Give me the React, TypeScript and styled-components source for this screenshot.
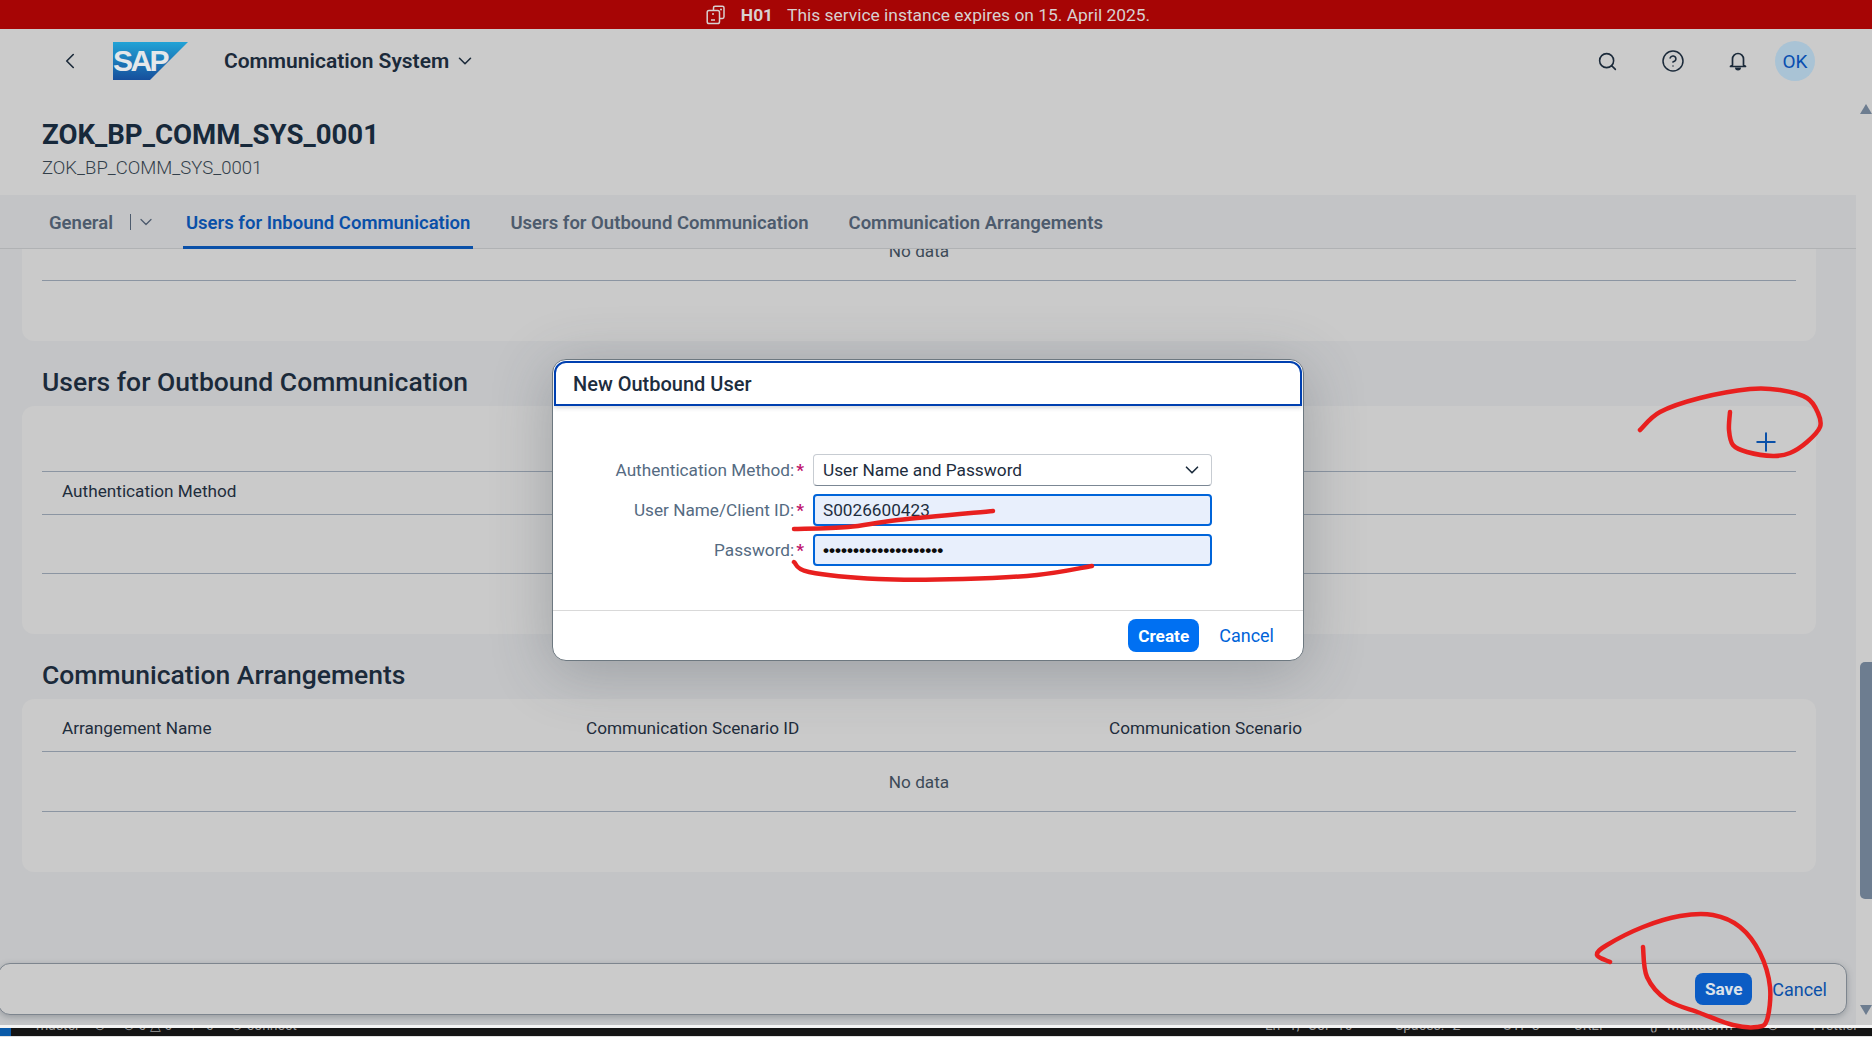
import { createGlobalStyle, styled } from 'styled-components';
import { ChevronDown, ChevronLeft, CircleHelp, Plus, Search } from 'lucide-react';

const GlobalStyle = createGlobalStyle`
  html, body {
    margin: 0;
    padding: 0;
    height: 100%;
    overflow: hidden;
    font-family: Roboto, "Liberation Sans", sans-serif;
    color: #1b2a3a;
  }
`;

type Point = [number, number];

// hand-drawn red marks from the reference, as points along each stroke
const scribbles: Point[][] = [
  [[1640, 430], [1660, 412], [1700, 398], [1750, 389], [1780, 390], [1807, 398], [1818, 413], [1820, 427], [1807, 442], [1790, 453], [1773, 456], [1747, 452], [1733, 445], [1729, 430], [1730, 412]],
  [[794, 529], [848, 527], [898, 520], [993, 511]],
  [[794, 562], [809, 572], [878, 579], [963, 579], [1037, 575], [1092, 566]],
  [[1610, 962], [1597, 955], [1607, 945], [1643, 927], [1680, 916], [1713, 915], [1740, 927], [1760, 953], [1770, 987], [1767, 1020], [1757, 1027], [1733, 1025], [1700, 1013], [1667, 1000], [1647, 977], [1643, 947]],
];

const smoothPath = (points: Point[]) =>
  points.reduce((d, point, i) => {
    if (i === 0) return `M${point[0]} ${point[1]}`;
    const p0 = points[Math.max(i - 2, 0)];
    const p1 = points[i - 1];
    const p3 = points[Math.min(i + 1, points.length - 1)];
    const c1 = [p1[0] + (point[0] - p0[0]) / 6, p1[1] + (point[1] - p0[1]) / 6];
    const c2 = [point[0] - (p3[0] - p1[0]) / 6, point[1] - (p3[1] - p1[1]) / 6];
    return `${d}C${c1[0]} ${c1[1]} ${c2[0]} ${c2[1]} ${point[0]} ${point[1]}`;
  }, '');

export default function App() {
  return (
    <Page>
      <GlobalStyle />
      <Banner>
        <BannerIcon viewBox="0 0 20 20">
          <path d="M7.5 5V2.8a1.6 1.6 0 0 1 1.6-1.6h7.3a1.6 1.6 0 0 1 1.6 1.6v9a1.6 1.6 0 0 1-1.6 1.6H14" fill="none" stroke="currentColor" strokeWidth="1.5" />
          <rect x="1.2" y="5.5" width="12.3" height="13" rx="1.8" fill="none" stroke="currentColor" strokeWidth="1.5" />
          <path d="M5 15h4" stroke="currentColor" strokeWidth="1.5" />
          <circle cx="15" cy="4.5" r="1" fill="currentColor" />
          <circle cx="7" cy="9" r="1" fill="currentColor" />
        </BannerIcon>
        <strong>H01</strong>
        <BannerText>This service instance expires on 15. April 2025.</BannerText>
      </Banner>

      <ShellBar>
        <BackButton>
          <ChevronLeft size={26} strokeWidth={1.5} />
        </BackButton>
        <SapLogo />
        <AppTitle>
          Communication System
          <ChevronDown size={22} strokeWidth={1.7} />
        </AppTitle>
        <ShellActions>
          <ShellIcon>
            <Search size={21} strokeWidth={1.8} />
          </ShellIcon>
          <ShellIcon>
            <CircleHelp size={24} strokeWidth={1.5} />
          </ShellIcon>
          <ShellIcon>
            <BellIcon />
          </ShellIcon>
          <Avatar>OK</Avatar>
        </ShellActions>
      </ShellBar>

      <Workspace>
        <MainColumn>
          <TitleBlock>
            <PageTitle>ZOK_BP_COMM_SYS_0001</PageTitle>
            <PageSubtitle>ZOK_BP_COMM_SYS_0001</PageSubtitle>
          </TitleBlock>

          <TabBar>
            <Tab $first>General</Tab>
            <TabMore>
              <ChevronDown size={20} strokeWidth={1.5} />
            </TabMore>
            <Tab $active>Users for Inbound Communication</Tab>
            <Tab>Users for Outbound Communication</Tab>
            <Tab>Communication Arrangements</Tab>
          </TabBar>

          <Content>
            <ScrolledCard>
              <NoData>No data</NoData>
            </ScrolledCard>

            <SectionTitle>Users for Outbound Communication</SectionTitle>
            <Card>
              <CardToolbar>
                <Plus size={30} strokeWidth={1.6} />
              </CardToolbar>
              <HeaderRow $bordered>
                <HeaderCell>Authentication Method</HeaderCell>
              </HeaderRow>
              <EmptyRow />
            </Card>

            <SectionTitle>Communication Arrangements</SectionTitle>
            <Card>
              <HeaderRow>
                <HeaderCell>Arrangement Name</HeaderCell>
                <HeaderCell>Communication Scenario ID</HeaderCell>
                <HeaderCell>Communication Scenario</HeaderCell>
              </HeaderRow>
              <NoData>No data</NoData>
            </Card>
          </Content>

          <FooterBar>
            <SaveButton>Save</SaveButton>
            <FooterLink>Cancel</FooterLink>
          </FooterBar>
        </MainColumn>

        <ScrollRail>
          <ScrollArrow />
          <ScrollTrack>
            <ScrollThumb />
          </ScrollTrack>
          <ScrollArrow $down />
        </ScrollRail>
      </Workspace>

      <StatusBar>
        <StatusFlag />
        <StatusText>master &nbsp;&nbsp; ⊙ &nbsp;&nbsp;&nbsp; ⊘ 0 △ 0 &nbsp;&nbsp;&nbsp; ⚐ 0 &nbsp;&nbsp;&nbsp; ⊙ connect</StatusText>
        <StatusRight>Ln 1, Col 10 &nbsp;&nbsp;&nbsp; Spaces: 2 &nbsp;&nbsp;&nbsp; UTF-8 &nbsp;&nbsp; CRLF &nbsp;&nbsp;&nbsp; {'{}'} Markdown &nbsp;&nbsp; ⊙ &nbsp;&nbsp; Prettier</StatusRight>
      </StatusBar>

      <Dialog>
        <DialogHeader>New Outbound User</DialogHeader>
        <DialogBody>
          <FieldLabel>
            Authentication Method:<Required>*</Required>
          </FieldLabel>
          <SelectBox>
            User Name and Password
            <ChevronDown size={22} strokeWidth={1.8} />
          </SelectBox>
          <FieldLabel>
            User Name/Client ID:<Required>*</Required>
          </FieldLabel>
          <TextField>S0026600423</TextField>
          <FieldLabel>
            Password:<Required>*</Required>
          </FieldLabel>
          <TextField $secret>••••••••••••••••••••</TextField>
        </DialogBody>
        <DialogFooter>
          <PrimaryButton>Create</PrimaryButton>
          <FooterLink $bright>Cancel</FooterLink>
        </DialogFooter>
      </Dialog>

      <Scribbles viewBox="0 0 1872 1037">
        {scribbles.map((points, index) => (
          <path key={index} d={smoothPath(points)} />
        ))}
      </Scribbles>
    </Page>
  );
}

function BellIcon() {
  return (
    <svg width="22" height="22" viewBox="0 0 22 22">
      <path d="M5.5 15V9a5.5 5.5 0 0 1 11 0v6l2 1.5H3.5z" fill="none" stroke="currentColor" strokeWidth="1.7" strokeLinejoin="round" />
      <path d="M8 17.5h6a3 3 0 0 1-6 0z" fill="currentColor" />
    </svg>
  );
}

function SapLogo() {
  return (
    <LogoMark viewBox="0 0 75 38">
      <defs>
        <linearGradient id="sapFill" x1="0" y1="0" x2="0" y2="1">
          <stop offset="0" stopColor="#22a3d6" />
          <stop offset="1" stopColor="#164f9c" />
        </linearGradient>
      </defs>
      <polygon points="0,0 75,0 37,38 0,38" fill="url(#sapFill)" />
      <text x="0" y="29" fontFamily="Liberation Sans, sans-serif" fontWeight="700" fontSize="30" letterSpacing="-2.6" fill="#e3e7ea">
        SAP
      </text>
    </LogoMark>
  );
}

const Page = styled.div`
  position: relative;
  display: flex;
  flex-direction: column;
  width: 1872px;
  height: 1037px;
  overflow: hidden;
  background: #cbcbcb;
`;

const Banner = styled.div`
  display: flex;
  align-items: center;
  justify-content: center;
  flex: 0 0 29px;
  padding-right: 16px;
  color: #d8d0d0;
  background: #a60505;
  font-size: 17.4px;

  strong {
    margin-right: 14px;
    font-weight: 700;
  }
`;

const BannerIcon = styled.svg`
  width: 20px;
  height: 20px;
  margin-right: 15px;
`;

const BannerText = styled.span`
  font-weight: 400;
`;

const ShellBar = styled.header`
  display: flex;
  align-items: center;
  flex: 0 0 64px;
  padding-right: 57px;
  color: #1b2a3a;
`;

const BackButton = styled.span`
  display: flex;
  margin-left: 57px;
`;

const LogoMark = styled.svg`
  width: 75px;
  height: 38px;
  margin-left: 30px;
`;

const AppTitle = styled.div`
  display: flex;
  align-items: center;
  gap: 5px;
  margin-left: 36px;
  font-size: 21px;
  font-weight: 600;
`;

const ShellActions = styled.div`
  display: flex;
  align-items: center;
  margin-left: auto;
`;

const ShellIcon = styled.span`
  display: flex;
  justify-content: center;
  width: 65px;
`;

const Avatar = styled.span`
  display: flex;
  align-items: center;
  justify-content: center;
  width: 40px;
  height: 40px;
  margin-left: 5px;
  border-radius: 50%;
  color: #0a4fb0;
  background: #a9c3d5;
  font-size: 19px;
`;

const Workspace = styled.div`
  display: flex;
  flex: 1;
  min-height: 0;
`;

const MainColumn = styled.div`
  position: relative;
  display: flex;
  flex-direction: column;
  flex: 0 0 1856px;
  min-height: 0;
`;

const TitleBlock = styled.div`
  flex: 0 0 102px;
  padding: 27px 0 0 42px;
  box-sizing: border-box;
`;

const PageTitle = styled.h1`
  margin: 0;
  color: #17293b;
  font-size: 27.6px;
  line-height: 30px;
  font-weight: 700;
`;

const PageSubtitle = styled.div`
  margin-top: 7px;
  color: #333f4a;
  font-size: 18.5px;
  line-height: 22px;
  font-weight: 300;
`;

const TabBar = styled.nav`
  display: flex;
  align-items: stretch;
  flex: 0 0 54px;
  box-sizing: border-box;
  padding-left: 46px;
  background: #c3c4c6;
  border-bottom: 1px solid #b0b2b4;
`;

const Tab = styled.div<{ $active?: boolean; $first?: boolean }>`
  display: flex;
  align-items: center;
  margin-right: ${({ $first }) => ($first ? '14px' : '34px')};
  margin-bottom: -1px;
  padding: 5px 3px 0;
  color: ${({ $active }) => ($active ? '#0a50a8' : '#4d5b6d')};
  border-bottom: 3px solid ${({ $active }) => ($active ? '#0a50a8' : 'transparent')};
  font-size: 18.5px;
  font-weight: 600;
  white-space: nowrap;
`;

const TabMore = styled.span`
  display: flex;
  align-items: center;
  height: 16px;
  align-self: center;
  margin-right: 27px;
  padding-left: 5px;
  color: #4d5b6d;
  border-left: 1px solid #4d5b6d;
`;

const Content = styled.main`
  flex: 1;
  min-height: 0;
  overflow: hidden;
  padding: 0 40px 0 22px;
  background: #c3c4c6;
`;

const Card = styled.section`
  padding: 0 20px 60px;
  border-radius: 12px;
  background: #cacaca;
`;

const ScrolledCard = styled(Card)`
  margin-top: -28px;
`;

const NoData = styled.div`
  display: flex;
  align-items: center;
  justify-content: center;
  height: 60px;
  box-sizing: border-box;
  border-bottom: 1px solid #8b95a2;
  color: #3d4a58;
  font-size: 17.2px;
`;

const SectionTitle = styled.h2`
  margin: 0;
  padding-left: 20px;
  height: 65px;
  color: #1b2a3a;
  font-size: 26.5px;
  line-height: 82px;
  font-weight: 500;
`;

const CardToolbar = styled.div`
  display: flex;
  align-items: flex-end;
  justify-content: flex-end;
  height: 65px;
  box-sizing: border-box;
  padding: 0 15px 14px 0;
  color: #0a50a8;
`;

const HeaderRow = styled.div<{ $bordered?: boolean }>`
  display: grid;
  grid-template-columns: 524px 523px 1fr;
  height: ${({ $bordered }) => ($bordered ? '38px' : '47px')};
  align-items: center;
  padding: ${({ $bordered }) => ($bordered ? '0 20px 4px' : '5px 20px 0')};
  border-top: ${({ $bordered }) => ($bordered ? '1px solid #8b95a2' : 'none')};
  border-bottom: 1px solid #8b95a2;
`;

const HeaderCell = styled.div`
  color: #1f2d3c;
  font-size: 17.2px;
  line-height: 24px;
`;

const EmptyRow = styled.div`
  height: 58px;
  border-bottom: 1px solid #8b95a2;
`;

const FooterBar = styled.footer`
  position: absolute;
  left: -2px;
  right: 9px;
  bottom: 10px;
  display: flex;
  align-items: center;
  justify-content: flex-end;
  gap: 20px;
  height: 52px;
  box-sizing: border-box;
  padding-right: 19px;
  border: 1px solid #7d858e;
  border-radius: 12px;
  background: #cbcbcb;
  box-shadow: 0 2px 6px rgba(70, 80, 90, 0.35);
`;

const SaveButton = styled.span`
  display: flex;
  align-items: center;
  justify-content: center;
  width: 57px;
  height: 32px;
  border-radius: 8px;
  color: #dbe2ea;
  background: #0b5cc4;
  font-size: 17.2px;
  font-weight: 700;
`;

const FooterLink = styled.span<{ $bright?: boolean }>`
  color: ${({ $bright }) => ($bright ? '#0064d9' : '#0a50a8')};
  font-size: 18px;
`;

const ScrollRail = styled.div`
  display: flex;
  flex-direction: column;
  flex: 0 0 16px;
  padding-top: 11px;
  padding-bottom: 10px;
  box-sizing: border-box;
  align-items: flex-end;
`;

const ScrollArrow = styled.span<{ $down?: boolean }>`
  flex: 0 0 10px;
  box-sizing: border-box;
  width: 0;
  height: 10px;
  border-left: 6px solid transparent;
  border-right: 6px solid transparent;
  border-bottom: ${({ $down }) => ($down ? 'none' : '10px solid #6d7d90')};
  border-top: ${({ $down }) => ($down ? '10px solid #6d7d90' : 'none')};
`;

const ScrollTrack = styled.div`
  flex: 1;
  min-height: 0;
  padding-top: 548px;
  padding-bottom: 106px;
  display: flex;
`;

const ScrollThumb = styled.div`
  width: 12px;
  border-radius: 5px 0 0 5px;
  background: #6d7d90;
`;

const StatusBar = styled.div`
  position: relative;
  display: flex;
  justify-content: space-between;
  flex: 0 0 12px;
  box-sizing: border-box;
  overflow: hidden;
  color: #9a9a9a;
  background: #141414;
  border-top: 3px solid #f4f4f4;
  border-bottom: 1px solid #e0e0e0;
  font-size: 14px;
  line-height: 1;
`;

const StatusFlag = styled.span`
  position: absolute;
  left: 0;
  top: 0;
  bottom: 0;
  width: 11px;
  background: #0a5aa8;
`;

const StatusText = styled.span`
  margin: -10px 0 0 36px;
`;

const StatusRight = styled.span`
  margin: -10px 14px 0 0;
  word-spacing: 5px;
`;

const Dialog = styled.div`
  position: absolute;
  left: 552px;
  top: 359px;
  display: flex;
  flex-direction: column;
  width: 752px;
  height: 302px;
  box-sizing: border-box;
  overflow: hidden;
  border: 1px solid #6d7880;
  border-radius: 14px;
  background: #ffffff;
  box-shadow: 0 10px 60px rgba(60, 70, 80, 0.3);
`;

const DialogHeader = styled.div`
  display: flex;
  align-items: center;
  flex: 0 0 45px;
  box-sizing: border-box;
  margin: 1px 1px 0;
  padding-left: 17px;
  border: 2px solid #0040b0;
  border-radius: 12px 12px 0 0;
  box-shadow: 0 2px 4px rgba(60, 70, 80, 0.2);
  color: #1d2d3e;
  font-size: 20px;
  font-weight: 500;
`;

const DialogBody = styled.div`
  display: grid;
  grid-template-columns: 260px 399px;
  grid-auto-rows: 32px;
  align-items: center;
  row-gap: 8px;
  flex: 0 0 205px;
  box-sizing: border-box;
  padding-top: 48px;
  border-bottom: 1px solid #d9d9d9;
`;

const FieldLabel = styled.div`
  padding-right: 9px;
  color: #556b82;
  font-size: 17.2px;
  text-align: right;
`;

const Required = styled.span`
  margin-left: 2px;
  color: #c0156f;
  font-weight: 700;
`;

const SelectBox = styled.div`
  display: flex;
  align-items: center;
  justify-content: space-between;
  height: 32px;
  box-sizing: border-box;
  padding: 0 8px 0 9px;
  border: 1px solid #c7ccd2;
  border-bottom-color: #7b8794;
  border-radius: 4px;
  color: #1d2d3e;
  font-size: 17.3px;
`;

const TextField = styled.div<{ $secret?: boolean }>`
  display: flex;
  align-items: center;
  height: 32px;
  box-sizing: border-box;
  padding: 0 8px;
  border: 2px solid #0064d9;
  border-radius: 4px;
  background: #e8effc;
  color: ${({ $secret }) => ($secret ? '#0c0c0c' : '#1d2d3e')};
  font-family: ${({ $secret }) => ($secret ? '"Liberation Sans", sans-serif' : 'inherit')};
  font-size: 17.2px;
  font-weight: ${({ $secret }) => ($secret ? 700 : 400)};
`;

const DialogFooter = styled.div`
  display: flex;
  align-items: center;
  justify-content: flex-end;
  gap: 20px;
  flex: 1;
  padding-right: 29px;
`;

const PrimaryButton = styled.span`
  display: flex;
  align-items: center;
  justify-content: center;
  width: 71px;
  height: 33px;
  border-radius: 8px;
  color: #ffffff;
  background: #0070f2;
  font-size: 17.2px;
  font-weight: 700;
`;

const Scribbles = styled.svg`
  position: absolute;
  inset: 0;
  width: 1872px;
  height: 1037px;
  pointer-events: none;
  fill: none;
  stroke: #e8201f;
  stroke-width: 4.5;
  stroke-linecap: round;
  stroke-linejoin: round;
`;
